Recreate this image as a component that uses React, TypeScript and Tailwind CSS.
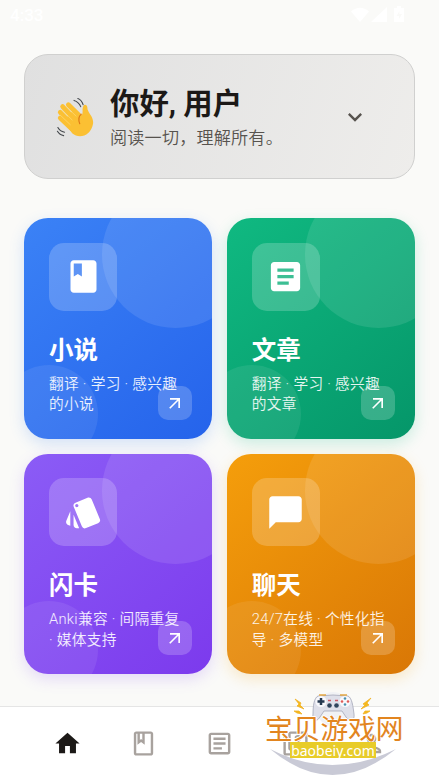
import React from "react";
import { MdArrowOutward, MdArticle, MdBook, MdChatBubble, MdHome, MdKeyboardArrowDown, MdOutlineArticle, MdOutlineBook, MdOutlinePerson, MdOutlineQuiz, MdStyle } from "react-icons/md";

const cards = [
  {
    title: "小说",
    lines: ["翻译 · 学习 · 感兴趣", "的小说"],
    icon: MdBook,
    color: "from-[#3b82f6] to-[#2563eb] shadow-[0_5px_15px_rgba(59,130,246,0.2)]",
  },
  {
    title: "文章",
    lines: ["翻译 · 学习 · 感兴趣", "的文章"],
    icon: MdArticle,
    color: "from-[#10b981] to-[#059669] shadow-[0_5px_15px_rgba(16,185,129,0.2)]",
  },
  {
    title: "闪卡",
    lines: ["Anki兼容 · 间隔重复", "· 媒体支持"],
    icon: MdStyle,
    color: "from-[#8b5cf6] to-[#7c3aed] shadow-[0_5px_15px_rgba(139,92,246,0.2)]",
  },
  {
    title: "聊天",
    lines: ["24/7在线 · 个性化指", "导 · 多模型"],
    icon: MdChatBubble,
    color: "from-[#f59e0b] to-[#d97706] shadow-[0_5px_15px_rgba(245,158,11,0.2)]",
  },
];

const tabs = [MdHome, MdOutlineBook, MdOutlineArticle, MdOutlineQuiz, MdOutlinePerson];

function StatusBar() {
  return (
    <div className="flex h-[30px] items-center justify-between pr-[33px] pl-[10px] text-white">
      <span className="font-[Roboto] text-[17px] leading-none font-medium">4:33</span>
      <svg width="56" height="18" viewBox="0 0 56 18" fill="currentColor">
        <path d="M1 5.500Q10 -2 19 5.500L10 16Z" />
        <path d="M21 16L37 1V16Z" />
        <path fillRule="evenodd" d="M44 2h3V0h4v2h3v14H44ZM49.500 5l-3 5h2.500v3l3-5h-2.500Z" />
      </svg>
    </div>
  );
}

function WavingHand() {
  return (
    <svg className="mt-[2px]" width="38" height="42" viewBox="0 0 40 44" fill="none" strokeLinecap="round">
      <g stroke="#fbc033" strokeWidth="5">
        <path d="M13 8L27 22" />
        <path d="M7 10L23 27" />
        <path d="M4.500 16L19 31" />
        <path d="M4.500 22L17 34" />
      </g>
      <path d="M8 25L20 12L27 19C29 17 27 12 29 9C30 7 33 8 33 11C33 17 40 20 39 28C37 40 25 45 17 38Z" fill="#fbc033" />
      <g stroke="#fddc7c" strokeWidth="0.7">
        <path d="M11 10L21 20" />
        <path d="M6.500 14L17 24" />
        <path d="M4.500 19L15 29" />
      </g>
      <path d="M26.500 18C24 20 23.500 24 25 28" stroke="#e07a16" strokeWidth="1.200" />
      <g stroke="#45494d" strokeWidth="1.200">
        <path d="M19 3.500Q24 5 26 10" />
        <path d="M23 1.500Q27 3 28.500 8" />
        <path d="M2 32Q4 36 9 37" />
        <path d="M1.500 36Q4 40 8 40.500" />
      </g>
    </svg>
  );
}

function Watermark() {
  return (
    <div className="absolute top-[691px] left-[262px] h-[86px] w-[144px]">
      <svg className="absolute inset-0" width="144" height="86" viewBox="0 0 144 86" fill="none">
        <path d="M8 58Q70 90 134 58Q70 110 8 58Z" fill="#c9cad6" />
        <circle cx="71" cy="18" r="17" fill="#f1f2f5" />
        <path d="M56 5Q71 3 86 5C90 7 91 15 92 23C93 30 88 32 84 26L80 20H62L58 26C54 32 50 30 51 23C51 15 52 7 56 5Z" fill="#dfe0ea" stroke="#a5a7b7" strokeWidth="0.800" />
        <path d="M57 4h7M78 4h7" stroke="#e5a844" strokeWidth="1.500" />
        <circle cx="59" cy="10.500" r="5.500" fill="#f8f8fc" />
        <circle cx="83" cy="10.500" r="5.500" fill="#f8f8fc" />
        <path d="M59 7v7M55.500 10.500h7" stroke="#263950" strokeWidth="2.500" />
        <circle cx="67.500" cy="14.500" r="2.300" fill="#30455d" />
        <circle cx="74.500" cy="14.500" r="2.300" fill="#30455d" />
        <path d="M66 9.500h3M73 9.500h3" stroke="#cf5965" strokeWidth="1.500" />
        <circle cx="83" cy="7.500" r="1.300" fill="#4b91b0" />
        <circle cx="83" cy="13.500" r="1.300" fill="#4b91b0" />
        <circle cx="80" cy="10.500" r="1.300" fill="#e05b58" />
        <circle cx="86" cy="10.500" r="1.300" fill="#e05b58" />
        <path d="M33 8L39 12L38 14L42 18L35 15L37 13ZM32 20L37 20L40 23L35 22ZM109 7L101 13L103 14L99 18L107 14L105 12ZM108 20L103 20L101 23L105 22Z" fill="#f6b91b" stroke="#f0b32a" strokeWidth="0.800" />
      </svg>
      <div className="absolute top-[26px] left-[3px] text-[27.7px] leading-[26px] whitespace-nowrap text-[#e2851f] [text-shadow:0_0_1px_#fff,1px_0_0_#fff,-1px_0_0_#fff,0_1px_0_#fff,0_-1px_0_#fff]">宝贝游戏网</div>
      <div className="absolute top-[51px] left-[28px] flex h-[16px] w-[86px] items-center justify-center bg-[#e8cc29] font-['Noto_Sans','Open_Sans',sans-serif] text-[14px] leading-[15px] text-white">baobeiy.com</div>
    </div>
  );
}

export default function App() {
  return (
    <div className="relative flex h-[780px] w-[439px] flex-col overflow-hidden bg-[#fafaf8] font-[Roboto,'Noto_Sans_CJK_SC',sans-serif]">
      <StatusBar />
      <main className="flex-1 pt-[24px] pr-[24.5px] pl-[24px]">
        <section className="flex h-[125px] items-center rounded-[24px] border border-[#d0d0cf] bg-linear-[108deg] from-[#e0e0e0] to-[#eeedeb] pr-[45px] pl-[31px]">
          <WavingHand />
          <div className="ml-[16px] flex-1 pt-[4px]">
            <h1 className="text-[29.4px] leading-[36px] font-bold text-[#1c1917]">你好, 用户</h1>
            <p className="mt-[2px] text-[17.1px] leading-[28px] font-[350] tracking-[0.2px] text-[#57534e]">阅读一切，理解所有。</p>
          </div>
          <MdKeyboardArrowDown className="size-[28px] text-[#57534e]" />
        </section>

        <div className="mt-[39px] grid grid-cols-2 gap-[15px]">
          {cards.map((card) => (
            <section key={card.title} className={`relative h-[220.5px] overflow-hidden rounded-[24px] bg-linear-[140deg] px-[25px] pt-[24.5px] text-white ${card.color}`}>
              <div className="absolute -top-[37px] -right-[37px] size-[147px] rounded-full bg-white/10" />
              <div className="absolute -bottom-[24.5px] -left-[24px] size-[98px] rounded-full bg-white/8" />
              <div className="relative flex size-[68px] items-center justify-center rounded-[15px] bg-white/20">
                <card.icon className="size-[39px]" />
              </div>
              <h2 className="relative mt-[24px] text-[24.5px] leading-[32px] font-bold">{card.title}</h2>
              <div className="relative mt-[7px] text-[14.7px] leading-[20.6px] font-[350] tracking-[0.3px] whitespace-nowrap text-white/90">
                {card.lines.map((line) => (
                  <p key={line}>{line}</p>
                ))}
              </div>
              <div className="absolute right-[19.5px] bottom-[19px] flex size-[34px] items-center justify-center rounded-[10px] bg-white/20">
                <MdArrowOutward className="size-[20px]" />
              </div>
            </section>
          ))}
        </div>
      </main>

      <nav className="flex h-[74px] items-center justify-center border-t border-[#e5e5e5] bg-white text-[#a8a29e]">
        {tabs.map((Icon, i) => (
          <div key={i} className="flex w-[76px] justify-center">
            <Icon className={i === 0 ? "size-[29px] text-[#1c1917]" : "size-[29px]"} />
          </div>
        ))}
      </nav>
      <Watermark />
    </div>
  );
}
